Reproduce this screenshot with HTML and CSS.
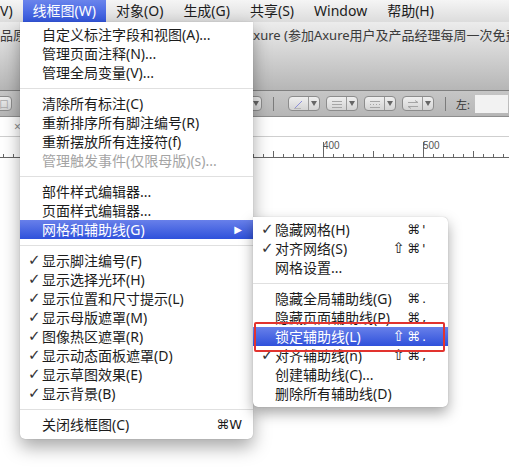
FILE: index.html
```html
<!DOCTYPE html>
<html>
  <head>
    <meta charset="UTF-8">
    <title>线框图菜单</title>
    <link rel="stylesheet" href="styles.css">
  </head>
  <body>
    <div class="screen">
      <div class="menubar">
        <span class="menubar-item cut">V)</span>
        <span class="menubar-item active">线框图(W)</span>
        <span class="menubar-item">对象(O)</span>
        <span class="menubar-item">生成(G)</span>
        <span class="menubar-item">共享(S)</span>
        <span class="menubar-item">Window</span>
        <span class="menubar-item">帮助(H)</span>
      </div>

      <div class="titlebar">
        <span class="title-left">品原型</span>
        <span class="title-right">Axure (参加Axure用户及产品经理每周一次免费培训)</span>
      </div>

      <div class="toolbar">
        <span class="tb-btn first"><span class="tb-ico">口</span></span>
        <span class="tb-btn drop"><span class="caret"></span></span>
        <span class="tb-sep"></span>
        <span class="tb-btn group">
          <svg width="14" height="10" viewBox="0 0 14 10"><path d="M3 9 L10 2" stroke="#8d8fd8" stroke-width="1"/><path d="M2 9.5 H9" stroke="#b5b5b5"/></svg>
          <span class="caret"></span>
        </span>
        <span class="tb-btn group">
          <svg width="14" height="10" viewBox="0 0 14 10"><path d="M2 2.5 H12 M2 5.5 H12 M2 8.5 H12" stroke="#a5a5a5"/></svg>
          <span class="caret"></span>
        </span>
        <span class="tb-btn group">
          <svg width="14" height="10" viewBox="0 0 14 10"><path d="M2 2.5 H12 M2 5.5 H3 M5 5.5 H6 M8 5.5 H9 M11 5.5 H12 M2 8.5 H12" stroke="#a5a5a5"/></svg>
          <span class="caret"></span>
        </span>
        <span class="tb-btn group">
          <svg width="14" height="10" viewBox="0 0 14 10"><path d="M2 3.5 H12 M9 1.5 L12 3.5 M2 7.5 H12 M5 9.5 L2 7.5" stroke="#a5a5a5" fill="none"/></svg>
          <span class="caret"></span>
        </span>
        <span class="tb-sep"></span>
        <span class="tb-label">左:</span>
        <span class="tb-input"></span>
        <span class="tb-label">上</span>
      </div>

      <div class="tabs">
        <span class="tab-close">×</span>
      </div>

      <div class="ruler">
        <span class="ruler-num">400</span>
        <span class="ruler-num">500</span>
      </div>

      <div class="canvas"></div>

      <!-- 线框图 下拉菜单 -->
      <div class="menu main-menu">
        <div class="row"><span class="chk"></span><span class="label">自定义标注字段和视图(A)...</span></div>
        <div class="row"><span class="chk"></span><span class="label">管理页面注释(N)...</span></div>
        <div class="row"><span class="chk"></span><span class="label">管理全局变量(V)...</span></div>
        <div class="sep"></div>
        <div class="row"><span class="chk"></span><span class="label">清除所有标注(C)</span></div>
        <div class="row"><span class="chk"></span><span class="label">重新排序所有脚注编号(R)</span></div>
        <div class="row"><span class="chk"></span><span class="label">重新摆放所有连接符(f)</span></div>
        <div class="row disabled"><span class="chk"></span><span class="label">管理触发事件(仅限母版)(s)...</span></div>
        <div class="sep"></div>
        <div class="row"><span class="chk"></span><span class="label">部件样式编辑器...</span></div>
        <div class="row"><span class="chk"></span><span class="label">页面样式编辑器...</span></div>
        <div class="row selected"><span class="chk"></span><span class="label">网格和辅助线(G)</span><span class="arrow">▶</span></div>
        <div class="sep"></div>
        <div class="row"><span class="chk">✓</span><span class="label">显示脚注编号(F)</span></div>
        <div class="row"><span class="chk">✓</span><span class="label">显示选择光环(H)</span></div>
        <div class="row"><span class="chk">✓</span><span class="label">显示位置和尺寸提示(L)</span></div>
        <div class="row"><span class="chk">✓</span><span class="label">显示母版遮罩(M)</span></div>
        <div class="row"><span class="chk">✓</span><span class="label">图像热区遮罩(R)</span></div>
        <div class="row"><span class="chk">✓</span><span class="label">显示动态面板遮罩(D)</span></div>
        <div class="row"><span class="chk">✓</span><span class="label">显示草图效果(E)</span></div>
        <div class="row"><span class="chk">✓</span><span class="label">显示背景(B)</span></div>
        <div class="sep"></div>
        <div class="row"><span class="chk"></span><span class="label">关闭线框图(C)</span><span class="keys">⌘W</span></div>
      </div>

      <!-- 网格和辅助线 子菜单 -->
      <div class="menu sub-menu">
        <div class="row"><span class="chk">✓</span><span class="label">隐藏网格(H)</span><span class="keys">⌘</span><span class="key">'</span></div>
        <div class="row"><span class="chk">✓</span><span class="label">对齐网络(S)</span><span class="keys"><span class="shift">⇧</span>⌘</span><span class="key">'</span></div>
        <div class="row"><span class="chk"></span><span class="label">网格设置...</span></div>
        <div class="sep"></div>
        <div class="row"><span class="chk"></span><span class="label">隐藏全局辅助线(G)</span><span class="keys">⌘</span><span class="key">.</span></div>
        <div class="row"><span class="chk"></span><span class="label">隐藏页面辅助线(P)</span><span class="keys">⌘</span><span class="key">,</span></div>
        <div class="row selected"><span class="chk"></span><span class="label">锁定辅助线(L)</span><span class="keys"><span class="shift">⇧</span>⌘</span><span class="key">.</span></div>
        <div class="row"><span class="chk">✓</span><span class="label">对齐辅助线(n)</span><span class="keys"><span class="shift">⇧</span>⌘</span><span class="key">,</span></div>
        <div class="row"><span class="chk"></span><span class="label">创建辅助线(C)...</span></div>
        <div class="row"><span class="chk"></span><span class="label">删除所有辅助线(D)</span></div>
      </div>

      <div class="mark"></div>
    </div>
  </body>
</html>
```

FILE: styles.css
```css
body {
  margin: 0;
  background: #fff;
  font-family: "Noto Sans", "Noto Sans CJK SC", sans-serif;
  font-size: 14px;
  color: #1c1c1c;
}

.screen {
  position: relative;
  width: 509px;
  height: 472px;
  overflow: hidden;
  display: flex;
  flex-direction: column;
}

/* 顶部菜单栏 */
.menubar {
  height: 22px;
  display: flex;
  align-items: stretch;
  background: linear-gradient(#f5f5f5, #dcdcdc);
  white-space: nowrap;
}
.menubar-item {
  padding: 0 10px;
  line-height: 22px;
}
.menubar-item.cut {
  padding: 0 10px 0 0;
}
.menubar-item.active {
  color: #fff;
  background: linear-gradient(#6a84ec, #3356dd);
}

/* 窗口标题 */
.titlebar {
  height: 68px;
  display: flex;
  background: linear-gradient(#ececec, #b6b6b6);
  color: #3b3b3b;
  font-size: 13px;
  white-space: nowrap;
}
.title-left {
  flex: none;
  width: 20px;
  overflow: hidden;
  line-height: 18px;
  padding-top: 4px;
}
.title-right {
  flex: none;
  margin-left: 225px;
  line-height: 18px;
  padding-top: 4px;
}

/* 工具栏 */
.toolbar {
  height: 27px;
  box-sizing: border-box;
  border-top: 1px solid #7f7f7f;
  border-bottom: 1px solid #8e8e8e;
  background: linear-gradient(#c6c6c6, #b6b6b6);
  display: flex;
  align-items: center;
  white-space: nowrap;
}
.tb-btn {
  height: 15px;
  box-sizing: border-box;
  border: 1px solid #8c8c8c;
  border-radius: 4px;
  background: linear-gradient(#efefef, #d3d3d3);
  display: flex;
  align-items: center;
  flex: none;
}
.tb-btn.first {
  width: 32px;
  margin-left: -20px;
  justify-content: flex-end;
  padding-right: 2px;
}
.tb-ico {
  font-size: 10px;
  line-height: 10px;
  color: #aaa;
}
.tb-btn.drop {
  width: 34px;
  margin-left: 216px;
  justify-content: flex-end;
}
.tb-btn.group {
  width: 32px;
  margin-left: 6px;
  padding-left: 3px;
}
.caret {
  margin-left: auto;
  width: 10px;
  height: 13px;
  border-left: 1px solid #9a9a9a;
  position: relative;
}
.caret::after {
  content: "";
  position: absolute;
  left: 2px;
  top: 4px;
  border-left: 3px solid transparent;
  border-right: 3px solid transparent;
  border-top: 5px solid #666;
}
.tb-sep {
  width: 1px;
  height: 14px;
  background: #7b7b7b;
  margin: 0 8px 0 11px;
  flex: none;
}
.tb-label {
  font-size: 11px;
  color: #333;
  margin-left: 2px;
}
.tb-input {
  width: 33px;
  height: 18px;
  background: #f2f2f2;
  margin: 0 7px 0 5px;
  flex: none;
}

/* 标签栏 */
.tabs {
  height: 20px;
  background: #fff;
  border-bottom: 1px solid #cfcfcf;
  box-sizing: border-box;
}
.tab-close {
  display: block;
  margin-left: 14px;
  padding-top: 3px;
  font-size: 12px;
  line-height: 14px;
  color: #8a8a8a;
}

/* 标尺 */
.ruler {
  height: 21px;
  display: flex;
  background:
    linear-gradient(#666, #666) left bottom / 100% 1px no-repeat,
    repeating-linear-gradient(to right, transparent 0 3px, #666 3px 4px, transparent 4px 10px) left bottom / 100% 4px no-repeat,
    repeating-linear-gradient(to right, transparent 0 23px, #666 23px 24px, transparent 24px 50px) left bottom / 100% 7px no-repeat,
    repeating-linear-gradient(to right, transparent 0 23px, #666 23px 24px, transparent 24px 100px) left bottom / 100% 16px no-repeat,
    #fff;
}
.ruler-num {
  flex: 0 0 100px;
  padding: 3px 0 0 3px;
  box-sizing: border-box;
  font-family: "Liberation Sans", sans-serif;
  font-size: 10px;
  line-height: 11px;
  color: #555;
}
.ruler-num:first-child {
  margin-left: 320px;
}

.canvas {
  flex: 1;
  background: #fff;
}

/* 菜单 */
.menu {
  position: absolute;
  background: #fff;
  white-space: nowrap;
}
.main-menu {
  left: 20px;
  top: 22px;
  width: 233px;
  padding: 3px 0 5px;
  border-radius: 0 0 5px 5px;
  box-shadow: 0 8px 18px rgba(0, 0, 0, 0.35), 0 0 1px rgba(0, 0, 0, 0.3);
}
.sub-menu {
  left: 253px;
  top: 217px;
  width: 195px;
  padding: 3px 0 4px;
  border-radius: 0 5px 5px 5px;
  box-shadow: 0 6px 14px rgba(0, 0, 0, 0.35), 0 0 1px rgba(0, 0, 0, 0.3);
}
.row {
  height: 19px;
  line-height: 19px;
  display: flex;
  padding: 0 11px 0 6px;
}
.sub-menu .row {
  padding-right: 18px;
}
.chk {
  width: 16px;
  box-sizing: border-box;
  padding-left: 2px;
  flex: none;
  font-family: "DejaVu Sans", sans-serif;
  font-size: 15px;
  color: #333;
}
.label {
  flex: 1;
}
.keys {
  font-family: "DejaVu Sans", sans-serif;
  font-size: 13px;
}
.shift {
  font-size: 15px;
  margin-right: 2px;
}
.key {
  width: 8px;
  padding-left: 2px;
  font-family: "DejaVu Sans", sans-serif;
  font-size: 13px;
}
.arrow {
  font-family: "DejaVu Sans", sans-serif;
  font-size: 10px;
  color: #fff;
}
.row.disabled {
  color: #a4a4a4;
}
.row.selected {
  color: #fff;
  background: linear-gradient(#6880ea, #2f51db);
}
.row.selected .chk {
  color: #fff;
}
.sep {
  height: 12px;
  background: linear-gradient(#e0e0e0, #e0e0e0) left center / 100% 1px no-repeat;
}

/* 红色标注框 */
.mark {
  position: absolute;
  left: 254px;
  top: 322px;
  width: 191px;
  height: 30px;
  box-sizing: border-box;
  border: 2px solid #e2332e;
  border-radius: 2px;
}
```
